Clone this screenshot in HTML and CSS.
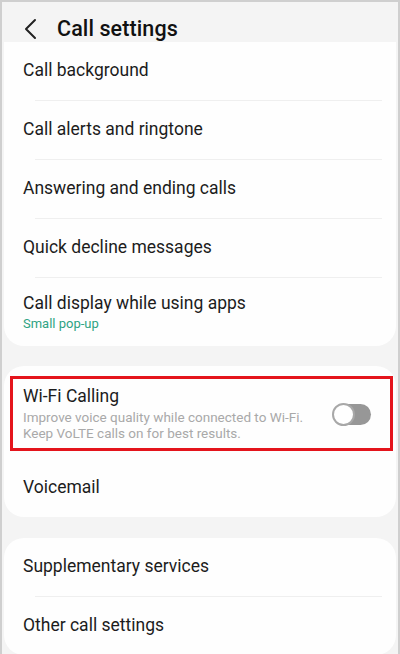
FILE: index.html
```html
<!DOCTYPE html>
<html>
<head>
<meta charset="utf-8">
<link rel="stylesheet" href="styles.css">
</head>
<body>
<div class="screen">
  <header class="header">
    <svg class="back" width="14" height="22" viewBox="0 0 14 22"><path d="M12 2 L3 11 L12 20" fill="none" stroke="#222" stroke-width="2" stroke-linecap="round" stroke-linejoin="round"/></svg>
    <h1 class="title">Call settings</h1>
  </header>
  <section class="card card-first">
    <div class="row">Call background</div>
    <div class="divider"></div>
    <div class="row">Call alerts and ringtone</div>
    <div class="divider"></div>
    <div class="row">Answering and ending calls</div>
    <div class="divider"></div>
    <div class="row">Quick decline messages</div>
    <div class="divider"></div>
    <div class="row row-sub">
      <div class="label">Call display while using apps</div>
      <div class="sub-green">Small pop-up</div>
    </div>
  </section>
  <section class="card card-second">
    <div class="wifi-wrap">
      <div class="highlight">
        <div class="wifi-text">
          <div class="label">Wi-Fi Calling</div>
          <div class="sub-gray">Improve voice quality while connected to Wi-Fi.<br>Keep VoLTE calls on for best results.</div>
        </div>
        <div class="toggle"><div class="knob"></div></div>
      </div>
    </div>
    <div class="row">Voicemail</div>
  </section>
  <section class="card card-third">
    <div class="row">Supplementary services</div>
    <div class="divider"></div>
    <div class="row">Other call settings</div>
  </section>
</div>
</body>
</html>
```
FILE: styles.css
```css
html, body { margin: 0; padding: 0; }
body {
  background: #f3f3f3;
  font-family: Roboto, "Liberation Sans", sans-serif;
  color: #1c1c1c;
}
.screen {
  height: 654px;
  box-sizing: border-box;
  border: 2px solid #cfcfcf;
  border-bottom: none;
  overflow: hidden;
  background: #f4f4f4;
}
.header {
  height: 40px;
  display: flex;
  align-items: flex-start;
  padding: 14px 0 0 21px;
  box-sizing: border-box;
}
.back { margin-right: 20px; margin-top: 2px; }
.title {
  margin: 0;
  font-size: 21.5px;
  line-height: 25px;
  font-weight: 500;
  color: #111;
  letter-spacing: 0.1px;
}
.card {
  background: #fefefe;
  border-radius: 20px;
  margin: 0 2px;
}
.card-first { border-radius: 0 0 20px 20px; }
.card-second { margin-top: 20px; }
.card-third { margin-top: 21px; }
.row {
  height: 58px;
  box-sizing: border-box;
  display: flex;
  align-items: center;
  padding: 0 0 3px 19px;
  font-size: 17.5px;
}
.row-sub {
  height: 68px;
  flex-direction: column;
  align-items: flex-start;
  justify-content: flex-start;
  padding-top: 15px;
}
.label { font-size: 17.5px; }
.sub-green {
  color: #2ea383;
  font-size: 13px;
  margin-top: 3px;
}
.divider {
  height: 1px;
  background: #efefef;
  margin: 0 14px 0 31px;
}
.wifi-wrap { padding: 10px 3px 8px 6px; }
.highlight {
  border: 3px solid #e4141c;
  height: 75px;
  box-sizing: border-box;
  display: flex;
  align-items: center;
  padding: 0 19px 0 10px;
}
.wifi-text { flex: 1; }
.sub-gray {
  color: #a9a9a9;
  font-size: 13.5px;
  line-height: 16px;
  margin-top: 3px;
}
.toggle {
  width: 38px;
  height: 21px;
  border-radius: 11px;
  background: #979797;
  position: relative;
  margin-top: 2px;
}
.knob {
  position: absolute;
  left: -1px;
  top: -1px;
  width: 19px;
  height: 19px;
  border-radius: 50%;
  background: #fff;
  border: 2px solid #a8a8a8;
}
```
